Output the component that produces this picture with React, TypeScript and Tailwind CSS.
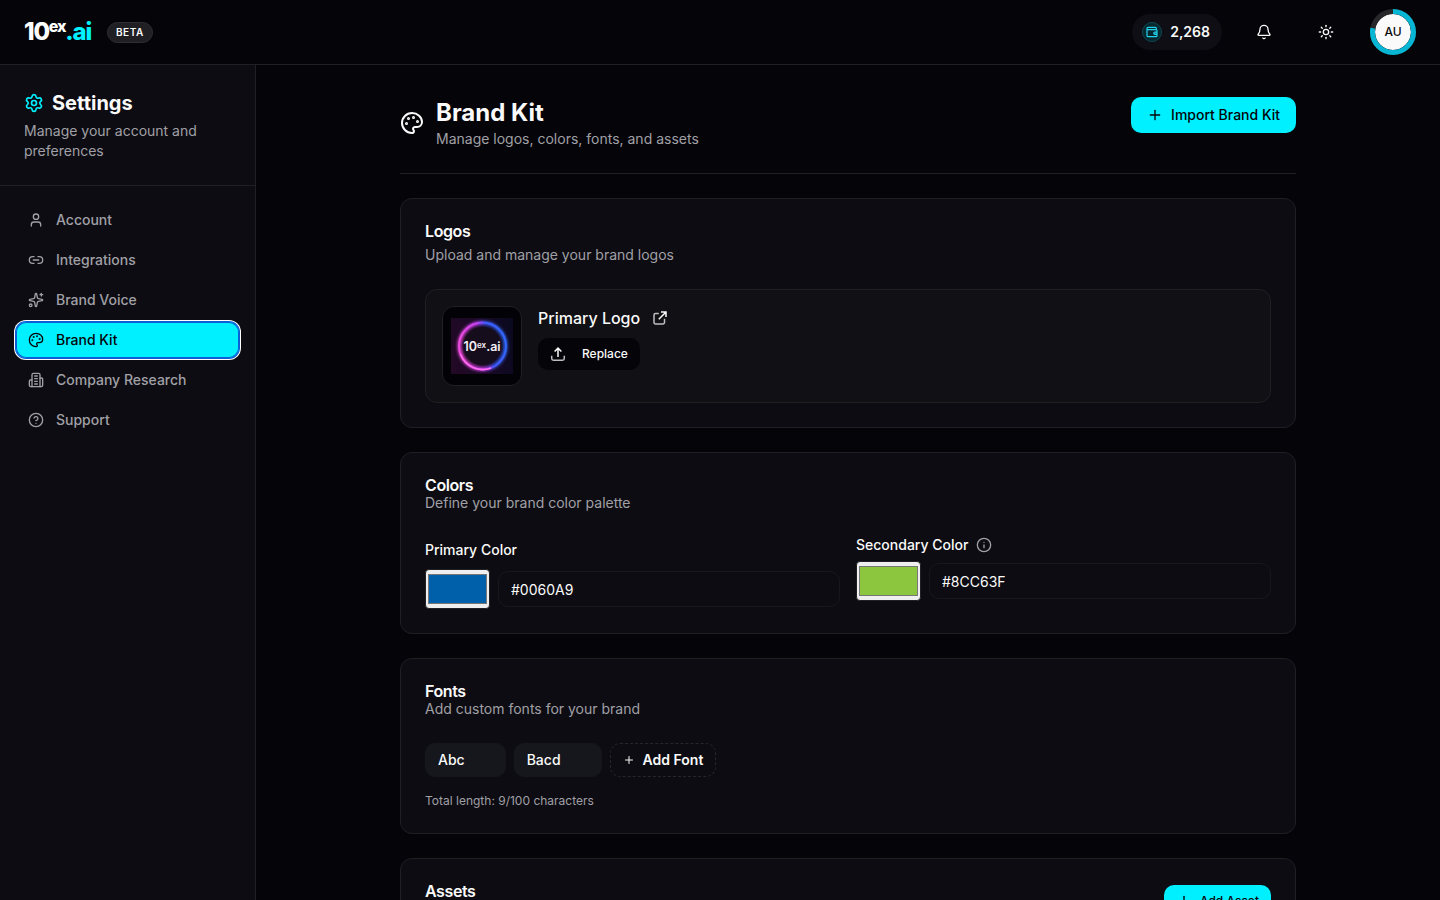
import type { ReactNode } from "react";
import { Bell, CircleHelp, Info, Link2, Palette, Plus, Settings, Sparkles, Sun, User } from "lucide-react";

function BuildingIcon({ className }: { className?: string }) {
  return (
    <svg
      viewBox="0 0 24 24"
      fill="none"
      stroke="currentColor"
      strokeWidth="2"
      strokeLinecap="round"
      strokeLinejoin="round"
      className={className}
      aria-hidden="true"
    >
      <path d="M6 22V4a2 2 0 0 1 2-2h8a2 2 0 0 1 2 2v18Z" />
      <path d="M6 12H4a2 2 0 0 0-2 2v6a2 2 0 0 0 2 2h2" />
      <path d="M18 9h2a2 2 0 0 1 2 2v9a2 2 0 0 1-2 2h-2" />
      <path d="M10 6h4M10 10h4M10 14h4M10 18h4" />
    </svg>
  );
}

function WalletIcon({ className }: { className?: string }) {
  return (
    <svg viewBox="0 0 12 12" fill="none" stroke="currentColor" strokeWidth="1.2" className={className} aria-hidden="true">
      <path d="M10.300 3.600V2.200a.9.9 0 0 0-.9-.9H2.200a1.200 1.200 0 0 0 0 2.400h7.900a.9.9 0 0 1 .9.9v5.200a.9.9 0 0 1-.9.9H2.200A1.200 1.200 0 0 1 1 9.600V2.500" />
      <path d="M11 6H9a1.200 1.200 0 0 0 0 2.400h2" fill="currentColor" fillOpacity="0.5" />
    </svg>
  );
}

function UploadIcon({ className }: { className?: string }) {
  return (
    <svg viewBox="0 0 16 16" fill="none" stroke="currentColor" strokeWidth="1.5" className={className} aria-hidden="true">
      <path d="M1.700 9.800v2.700a1.700 1.700 0 0 0 1.700 1.700h9.200a1.700 1.700 0 0 0 1.700-1.700V9.800" strokeOpacity="0.75" />
      <path d="M8 11V2.200M4.600 5.500 8 2.100l3.400 3.400" />
    </svg>
  );
}

function OpenIcon({ className }: { className?: string }) {
  return (
    <svg viewBox="0 0 16 16" fill="none" stroke="currentColor" strokeWidth="1.5" className={className} aria-hidden="true">
      <path d="M6.800 3.500H3.500a1.500 1.500 0 0 0-1.500 1.500v7.500a1.500 1.500 0 0 0 1.500 1.500H11a1.500 1.500 0 0 0 1.500-1.500V8.700" strokeOpacity="0.75" />
      <path d="M9 2h5v5M14 2 6.800 9.200" />
    </svg>
  );
}

function BrandLogo() {
  return (
    <a href="#" aria-label="10ex.ai" className="flex items-start text-2xl font-extrabold leading-8 tracking-tighter text-white">
      <span>10</span>
      <span className="text-base leading-5">ex</span>
      <span className="text-[#00f0ff]">.ai</span>
    </a>
  );
}

function Avatar() {
  return (
    <button type="button" aria-label="Account menu" className="grid size-[46px] place-items-center">
      <svg viewBox="0 0 46 46" className="col-start-1 row-start-1 size-[46px] -rotate-90" fill="none" aria-hidden="true">
        <circle cx="23" cy="23" r="20.5" stroke="#27272a" strokeWidth="5" />
        <circle cx="23" cy="23" r="20.5" stroke="#06b6d4" strokeWidth="5" pathLength="100" strokeDasharray="78 100" />
      </svg>
      <span className="col-start-1 row-start-1 grid size-9 place-items-center rounded-full bg-[#fafafa] text-xs font-medium text-[#09090b]">
        AU
      </span>
    </button>
  );
}

function TopBar() {
  return (
    <header className="flex h-[65px] shrink-0 items-center justify-between border-b border-[#1f1f24] px-6">
      <div className="flex items-center gap-4">
        <BrandLogo />
        <span className="rounded-full border border-[#2e2e34] bg-[#1f1f24] px-2 text-[10px] leading-[19px] font-semibold tracking-wider text-[#fafafa]">
          BETA
        </span>
      </div>
      <div className="flex items-center gap-6">
        <div className="flex items-center gap-[22px]">
          <button type="button" className="flex h-9 items-center gap-2 rounded-full bg-[#0f0e14] pr-3 pl-2.5 text-sm font-semibold text-[#fafafa]">
            <span className="grid size-5 place-items-center rounded-full border border-[#0b4954] bg-[#07262e] text-[#22d3ee]">
              <WalletIcon className="size-3" />
            </span>
            2,268
          </button>
          <button type="button" aria-label="Notifications" className="grid size-10 place-items-center text-[#fafafa]">
            <Bell className="size-4" />
          </button>
          <button type="button" aria-label="Toggle theme" className="grid size-10 place-items-center text-[#fafafa]">
            <Sun className="size-4" />
          </button>
        </div>
        <Avatar />
      </div>
    </header>
  );
}

const navItems = [
  { label: "Account", Icon: User },
  { label: "Integrations", Icon: Link2 },
  { label: "Brand Voice", Icon: Sparkles },
  { label: "Brand Kit", Icon: Palette, active: true },
  { label: "Company Research", Icon: BuildingIcon },
  { label: "Support", Icon: CircleHelp },
];

function Sidebar() {
  return (
    <aside className="w-64 shrink-0 border-r border-[#1f1f24] bg-[#0d0c12]">
      <div className="border-b border-[#1f1f24] p-6">
        <h2 className="flex items-center gap-2 text-xl font-bold text-[#fafafa]">
          <Settings className="size-5 text-[#00f0ff]" />
          Settings
        </h2>
        <p className="mt-1 text-sm text-[#a0a0a6]">Manage your account and preferences</p>
      </div>
      <nav className="flex flex-col gap-1 p-4">
        {navItems.map(({ label, Icon, active }) => (
          <a
            key={label}
            href="#"
            aria-current={active ? "page" : undefined}
            className={
              active
                ? "flex h-9 items-center gap-3 rounded-[10px] bg-[#00f0ff] px-3 text-sm font-medium text-[#050409] shadow-[inset_0_0_0_1px_#0a5fd6,0_0_0_1px_#0a5fd6,0_0_0_2px_#ffffff]"
                : "flex h-9 items-center gap-3 rounded-[10px] px-3 text-sm font-medium text-[#a0a0a6]"
            }
          >
            <Icon className="size-4" />
            {label}
          </a>
        ))}
      </nav>
    </aside>
  );
}

function Card({ title, description, spaced, action, children }: {
  title: string;
  description: string;
  spaced?: boolean;
  action?: ReactNode;
  children?: ReactNode;
}) {
  return (
    <section className="rounded-xl border border-[#1f1f24] bg-[#0d0c12] p-6">
      <div className="mb-6 flex items-center justify-between">
        <div className={spaced ? "flex flex-col gap-1.5" : "flex flex-col"}>
          <h3 className="text-base leading-4 font-semibold tracking-tight text-[#fafafa]">{title}</h3>
          <p className="text-sm text-[#a0a0a6]">{description}</p>
        </div>
        {action}
      </div>
      {children}
    </section>
  );
}

function LogoThumbnail() {
  return (
    <div className="grid size-20 shrink-0 place-items-center rounded-xl border border-[#1f1f24] bg-[#030206]">
      <svg viewBox="0 0 62 56" className="h-14 w-[62px]" role="img" aria-label="10ex.ai logo">
        <defs>
          <linearGradient id="ring" x1="0" y1="0.3" x2="1" y2="0.1">
            <stop offset="0" stopColor="#f04be0" />
            <stop offset="0.42" stopColor="#c23ff0" />
            <stop offset="0.6" stopColor="#3f5bff" />
            <stop offset="1" stopColor="#2f6bff" />
          </linearGradient>
          <linearGradient id="backdrop" x1="0" y1="0.6" x2="1" y2="0.4">
            <stop offset="0" stopColor="#220926" />
            <stop offset="0.5" stopColor="#190926" />
            <stop offset="1" stopColor="#0b0920" />
          </linearGradient>
          <filter id="glow" x="-20%" y="-20%" width="140%" height="140%">
            <feGaussianBlur stdDeviation="1.6" />
          </filter>
        </defs>
        <rect width="62" height="56" fill="url(#backdrop)" />
        <circle cx="31.5" cy="28" r="23.5" fill="#150a1c" stroke="url(#ring)" strokeWidth="3" filter="url(#glow)" />
        <circle cx="31.5" cy="28" r="23.5" fill="none" stroke="url(#ring)" strokeWidth="1.8" />
        <path d="M9.500 36A23.500 23.500 0 0 0 40 50" fill="none" stroke="#ff6df0" strokeWidth="1.500" />
        <text x="12.500" y="32.500" fill="#f4f0f8" fontFamily="Inter, sans-serif" fontWeight="600" fontSize="12.500">
          10
          <tspan fontSize="8" dy="-3">ex</tspan>
          <tspan dy="3">.ai</tspan>
        </text>
      </svg>
    </div>
  );
}

function ColorInputs({ id, value }: { id: string; value: string }) {
  return (
    <div className="flex items-center gap-2">
      <input
        id={id}
        type="color"
        defaultValue={value}
        className="h-10 w-[65px] shrink-0 rounded border border-[#1f1f24] bg-[#efefef] p-0"
      />
      <input
        type="text"
        aria-label={`${value} hex value`}
        defaultValue={value}
        className="h-9 min-w-0 flex-1 rounded-[10px] border border-[#17171c] bg-transparent px-3 text-sm text-[#fafafa]"
      />
    </div>
  );
}

export default function App() {
  return (
    <div className="flex h-screen flex-col overflow-hidden bg-[#050409] font-['Inter',sans-serif] text-[#fafafa]">
      <TopBar />
      <div className="flex min-h-0 flex-1">
        <Sidebar />
        <main className="min-w-0 flex-1 overflow-y-auto py-8 [scrollbar-width:none]">
          <div className="mx-auto flex max-w-4xl flex-col gap-6">
            <div className="flex items-start justify-between border-b border-[#1f1f24] pb-6">
              <div className="flex items-center gap-3">
                <Palette className="size-6" />
                <div>
                  <h1 className="text-2xl font-bold">Brand Kit</h1>
                  <p className="text-sm text-[#a0a0a6]">Manage logos, colors, fonts, and assets</p>
                </div>
              </div>
              <button type="button" className="flex h-9 items-center gap-2 rounded-[10px] bg-[#00f0ff] px-4 text-sm font-medium text-[#050409]">
                <Plus className="size-4" />
                Import Brand Kit
              </button>
            </div>

            <Card title="Logos" description="Upload and manage your brand logos" spaced>
              <div className="flex gap-4 rounded-xl border border-[#1f1f24] bg-[#111015] p-4">
                <LogoThumbnail />
                <div>
                  <div className="flex items-center gap-3">
                    <h4 className="text-base font-medium">Primary Logo</h4>
                    <a href="#" aria-label="Open primary logo">
                      <OpenIcon className="size-4" />
                    </a>
                  </div>
                  <button type="button" className="mt-2 flex h-8 items-center gap-4 rounded-[10px] bg-[#050409] px-3 text-xs font-medium">
                    <UploadIcon className="size-4" />
                    Replace
                  </button>
                </div>
              </div>
            </Card>

            <Card title="Colors" description="Define your brand color palette">
              <div className="grid grid-cols-2 gap-4">
                <div className="flex flex-col gap-1.5">
                  <label htmlFor="primary-color" className="text-sm leading-[26px] font-medium">
                    Primary Color
                  </label>
                  <ColorInputs id="primary-color" value="#0060A9" />
                </div>
                <div className="flex flex-col gap-2">
                  <div className="flex items-center gap-2">
                    <label htmlFor="secondary-color" className="text-sm leading-4 font-medium">
                      Secondary Color
                    </label>
                    <Info className="size-4 text-[#a0a0a6]" />
                  </div>
                  <ColorInputs id="secondary-color" value="#8CC63F" />
                </div>
              </div>
            </Card>

            <Card title="Fonts" description="Add custom fonts for your brand">
              <div className="flex gap-2">
                <span className="rounded-[10px] border border-[#15171c] bg-[#15171c] py-1.5 pr-10 pl-3 text-sm font-medium">Abc</span>
                <span className="rounded-[10px] border border-[#15171c] bg-[#15171c] py-1.5 pr-10 pl-3 text-sm font-medium">Bacd</span>
                <button type="button" className="flex items-center gap-2 rounded-[10px] border border-dashed border-[#26262b] px-3 py-1.5 text-sm font-semibold">
                  <Plus className="size-3" />
                  Add Font
                </button>
              </div>
              <p className="mt-4 text-xs text-[#a0a0a6]">Total length: 9/100 characters</p>
            </Card>

            <Card
              title="Assets"
              description="Upload and manage your brand assets"
              action={
                <button type="button" className="flex h-8 items-center gap-2 rounded-[10px] bg-[#00f0ff] px-3 text-xs font-medium text-[#050409]">
                  <Plus className="size-4" />
                  Add Asset
                </button>
              }
            />
          </div>
        </main>
      </div>
    </div>
  );
}
